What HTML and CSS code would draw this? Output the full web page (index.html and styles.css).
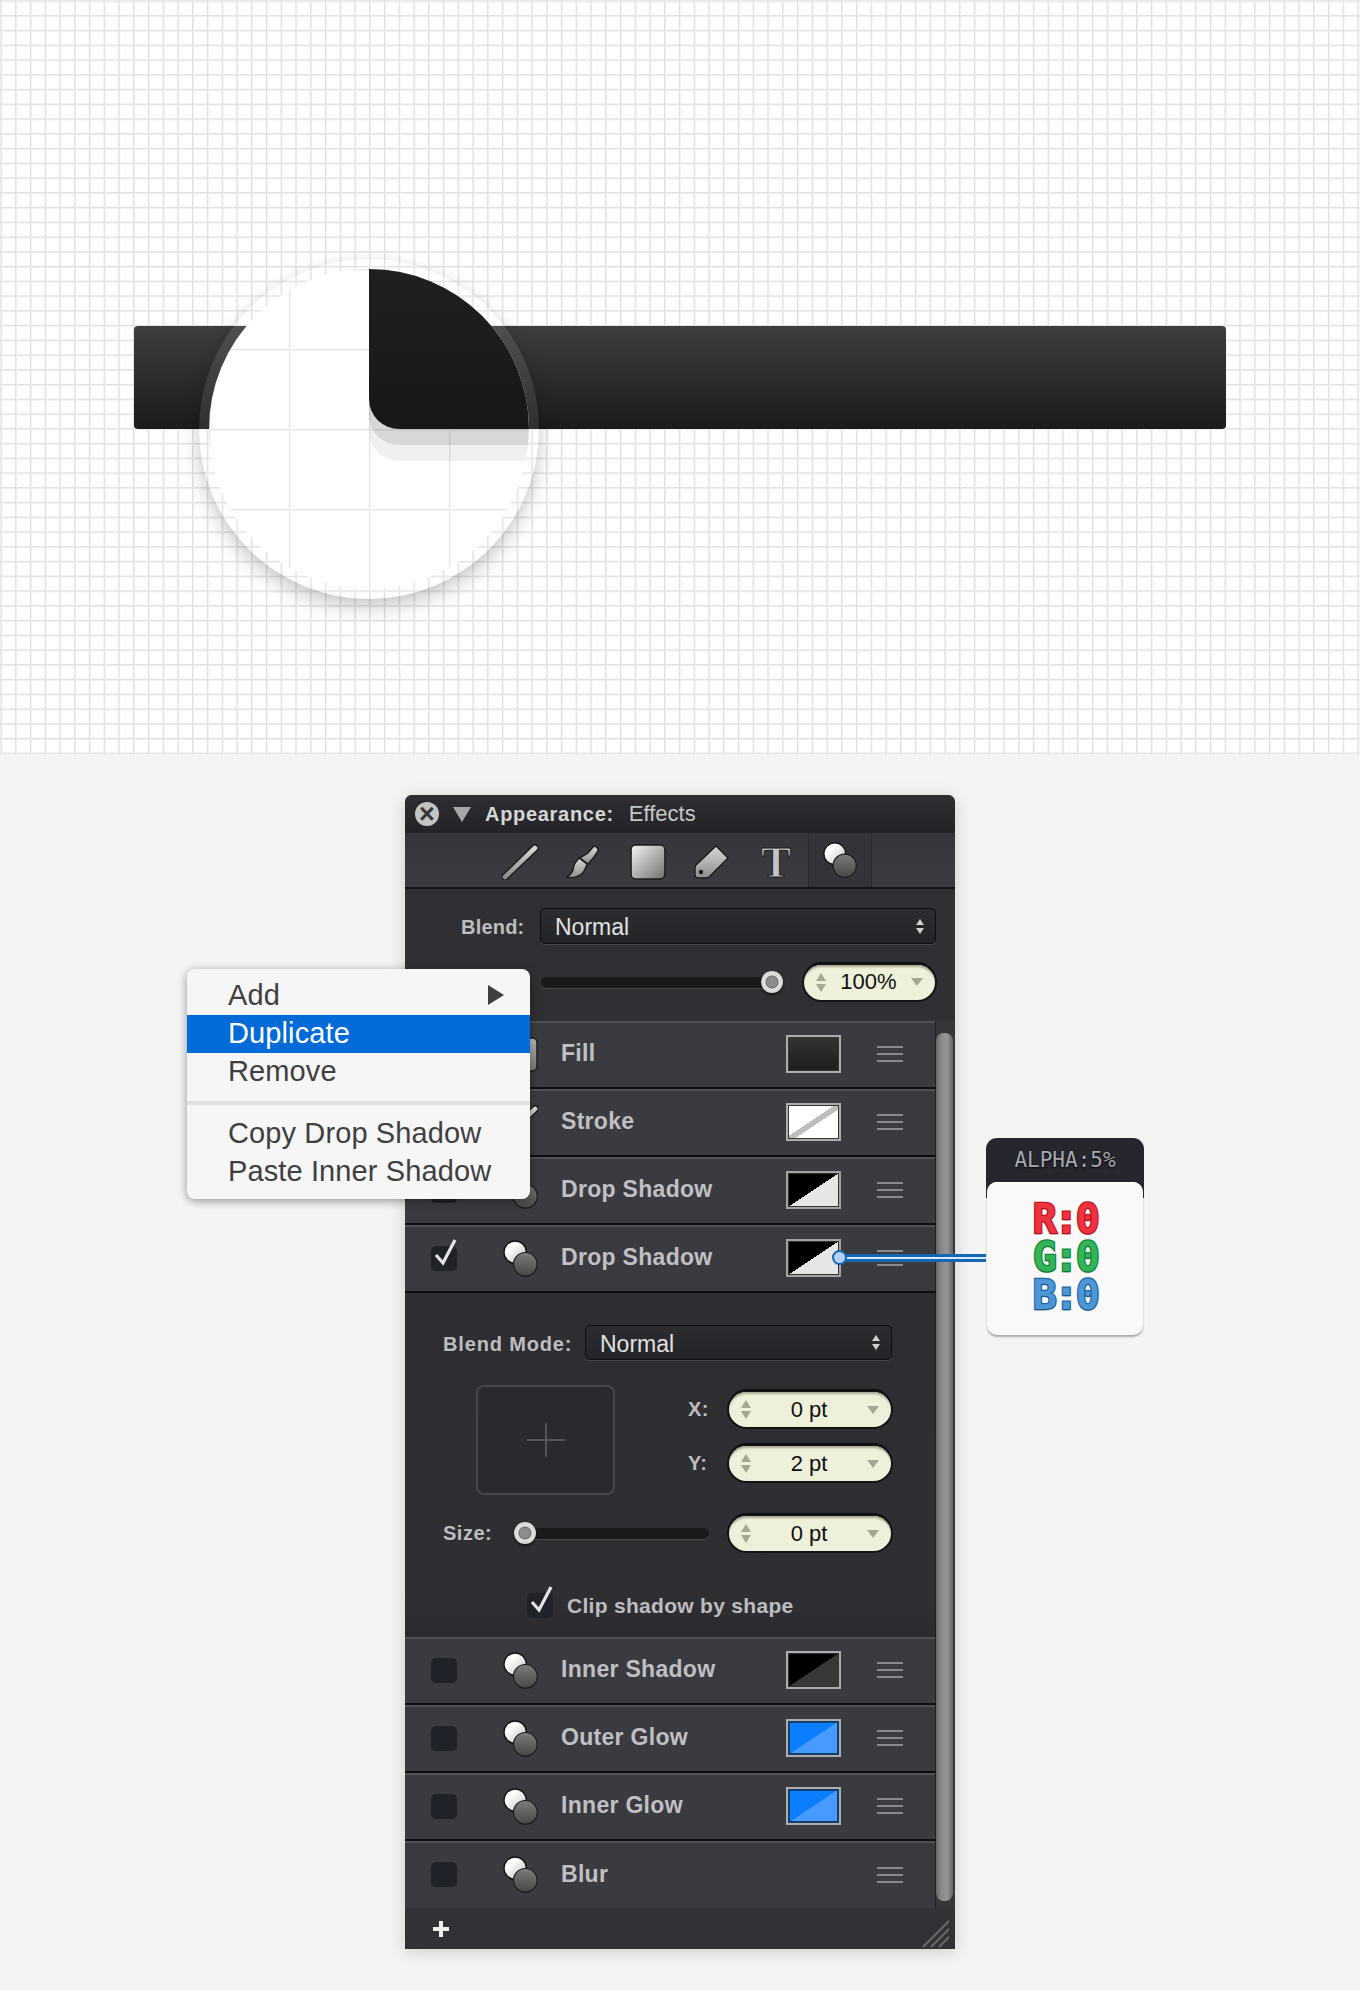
FILE: index.html
```html
<!DOCTYPE html>
<html lang="en">
<head>
    <meta charset="UTF-8" />
    <title>Appearance panel: Effects</title>
    <link rel="stylesheet" href="styles.css">
</head>
<body>
    <svg class="defs" aria-hidden="true">
        <defs>
            <linearGradient id="g-white" x1="0" y1="0" x2="1" y2="1">
                <stop offset="0" stop-color="#f4f4f4"/>
                <stop offset="1" stop-color="#707070"/>
            </linearGradient>
            <linearGradient id="g-tool" x1="0" y1="0" x2="0" y2="1">
                <stop offset="0" stop-color="#d8d8d8"/>
                <stop offset="1" stop-color="#8c8c8c"/>
            </linearGradient>
            <linearGradient id="g-ball" x1="0" y1="0" x2="1" y2="1">
                <stop offset="0.3" stop-color="#ffffff"/>
                <stop offset="1" stop-color="#bdbdbd"/>
            </linearGradient>
            <linearGradient id="g-dark" x1="0" y1="0" x2="0" y2="1">
                <stop offset="0" stop-color="#7c7c7c"/>
                <stop offset="1" stop-color="#464646"/>
            </linearGradient>
            <symbol id="ico-line" viewBox="0 0 36 36">
                <path d="M3 33 33 4" stroke="#1c1c1f" stroke-width="7.5" stroke-linecap="round"/>
                <path d="M3 33 33 4" stroke="url(#g-tool)" stroke-width="4.6" stroke-linecap="round"/>
            </symbol>
            <symbol id="ico-brush" viewBox="0 0 36 36">
                <path d="M1 33c7 2 15-1 18-8l2-5-8-6-4 5c-2 3-1 7-3 9-1 2-3 4-5 5z" fill="url(#g-tool)" stroke="#1c1c1f" stroke-width="1.4"/>
                <path d="M14 14l8-5 5-6c2-2 6 1 5 4l-4 6-6 7z" fill="url(#g-tool)" stroke="#1c1c1f" stroke-width="1.4"/>
            </symbol>
            <symbol id="ico-square" viewBox="0 0 34 34">
                <rect x="1" y="1" width="32" height="32" rx="4.5" fill="url(#g-white)" stroke="#1c1c1f" stroke-width="1.4"/>
            </symbol>
            <symbol id="ico-tag" viewBox="0 0 36 36">
                <path d="M22 2 34 14 15 33c-1 1-2 1-3 1H4c-2 0-3-1-3-3v-7c0-1 0-2 1-3z" fill="url(#g-tool)" stroke="#1c1c1f" stroke-width="1.4"/>
                <circle cx="7" cy="28" r="2.2" fill="#1c1c1f"/>
            </symbol>
            <symbol id="ico-fx" viewBox="0 0 36 38">
                <circle cx="12.5" cy="12.5" r="11.5" fill="url(#g-ball)" stroke="#141416" stroke-width="1.4"/>
                <circle cx="23" cy="25" r="12.2" fill="url(#g-dark)" stroke="#1a1a1c" stroke-width="1.2"/>
            </symbol>
            <symbol id="ico-check" viewBox="0 0 26 30">
                <path d="M4 17 11 25 23 2" fill="none" stroke="#e4e4e6" stroke-width="3.2"/>
            </symbol>
        </defs>
    </svg>

    <section class="canvas">
        <div class="bar"></div>
        <div class="lens">
            <div class="lens-inner">
                <div class="lens-shape"></div>
            </div>
        </div>
    </section>

    <section class="stage">
        <div class="panel">
            <header class="title-bar">
                <span class="close">&times;</span>
                <span class="disclosure"></span>
                <strong class="title">Appearance:</strong>
                <span class="subtitle">Effects</span>
            </header>

            <nav class="toolbar">
                <span class="tool"><svg class="tool-svg"><use href="#ico-line"/></svg></span>
                <span class="tool"><svg class="tool-svg"><use href="#ico-brush"/></svg></span>
                <span class="tool"><svg class="tool-svg"><use href="#ico-square"/></svg></span>
                <span class="tool"><svg class="tool-svg"><use href="#ico-tag"/></svg></span>
                <span class="tool tool-t">T</span>
                <span class="tool tool-active"><svg class="tool-svg"><use href="#ico-fx"/></svg></span>
            </nav>

            <div class="blend-area">
                <div class="blend-row">
                    <label class="field-label blend-label">Blend:</label>
                    <div class="select select-wide">
                        <span class="select-text">Normal</span>
                        <span class="updown"><i class="tri-up"></i><i class="tri-down"></i></span>
                    </div>
                </div>
                <div class="opacity-row">
                    <div class="slider slider-full"><span class="thumb thumb-end"></span></div>
                    <div class="pill pill-short">
                        <span class="steps"><i class="tri-up dim"></i><i class="tri-down dim"></i></span>
                        <span class="pill-value">100%</span>
                        <i class="tri-menu"></i>
                    </div>
                </div>
            </div>

            <div class="panel-body">
                <div class="effects">
                    <div class="row">
                        <span class="check"></span>
                        <svg class="row-icon"><use href="#ico-square"/></svg>
                        <span class="row-name">Fill</span>
                        <span class="swatch swatch-fill"></span>
                        <span class="grip"></span>
                    </div>
                    <div class="row">
                        <span class="check"></span>
                        <svg class="row-icon"><use href="#ico-line"/></svg>
                        <span class="row-name">Stroke</span>
                        <span class="swatch swatch-stroke"></span>
                        <span class="grip"></span>
                    </div>
                    <div class="row">
                        <span class="check"></span>
                        <svg class="row-icon"><use href="#ico-fx"/></svg>
                        <span class="row-name">Drop Shadow</span>
                        <span class="swatch swatch-drop"></span>
                        <span class="grip"></span>
                    </div>
                    <div class="row">
                        <span class="check"><svg class="check-mark"><use href="#ico-check"/></svg></span>
                        <svg class="row-icon"><use href="#ico-fx"/></svg>
                        <span class="row-name">Drop Shadow</span>
                        <span class="swatch swatch-drop"></span>
                        <span class="grip"></span>
                    </div>

                    <div class="details">
                        <div class="mode-row">
                            <label class="field-label mode-label">Blend Mode:</label>
                            <div class="select select-mode">
                                <span class="select-text">Normal</span>
                                <span class="updown"><i class="tri-up"></i><i class="tri-down"></i></span>
                            </div>
                        </div>
                        <div class="offset-row">
                            <div class="offset-box"><span class="cross"></span></div>
                            <div class="offset-fields">
                                <div class="offset-field">
                                    <label class="field-label offset-label">X:</label>
                                    <div class="pill">
                                        <span class="steps"><i class="tri-up dim"></i><i class="tri-down dim"></i></span>
                                        <span class="pill-value">0 pt</span>
                                        <i class="tri-menu"></i>
                                    </div>
                                </div>
                                <div class="offset-field">
                                    <label class="field-label offset-label">Y:</label>
                                    <div class="pill">
                                        <span class="steps"><i class="tri-up dim"></i><i class="tri-down dim"></i></span>
                                        <span class="pill-value">2 pt</span>
                                        <i class="tri-menu"></i>
                                    </div>
                                </div>
                            </div>
                        </div>
                        <div class="size-row">
                            <label class="field-label size-label">Size:</label>
                            <div class="slider slider-size"><span class="thumb thumb-start"></span></div>
                            <div class="pill">
                                <span class="steps"><i class="tri-up dim"></i><i class="tri-down dim"></i></span>
                                <span class="pill-value">0 pt</span>
                                <i class="tri-menu"></i>
                            </div>
                        </div>
                        <div class="clip-row">
                            <span class="check"><svg class="check-mark"><use href="#ico-check"/></svg></span>
                            <span class="clip-label">Clip shadow by shape</span>
                        </div>
                    </div>

                    <div class="row">
                        <span class="check"></span>
                        <svg class="row-icon"><use href="#ico-fx"/></svg>
                        <span class="row-name">Inner Shadow</span>
                        <span class="swatch swatch-inner"></span>
                        <span class="grip"></span>
                    </div>
                    <div class="row">
                        <span class="check"></span>
                        <svg class="row-icon"><use href="#ico-fx"/></svg>
                        <span class="row-name">Outer Glow</span>
                        <span class="swatch swatch-blue"></span>
                        <span class="grip"></span>
                    </div>
                    <div class="row">
                        <span class="check"></span>
                        <svg class="row-icon"><use href="#ico-fx"/></svg>
                        <span class="row-name">Inner Glow</span>
                        <span class="swatch swatch-blue"></span>
                        <span class="grip"></span>
                    </div>
                    <div class="row row-last">
                        <span class="check"></span>
                        <svg class="row-icon"><use href="#ico-fx"/></svg>
                        <span class="row-name">Blur</span>
                        <span class="swatch swatch-none"></span>
                        <span class="grip"></span>
                    </div>
                </div>
                <div class="scrollbar"><div class="scroll-thumb"></div></div>
            </div>

            <footer class="panel-foot">
                <svg class="plus" viewBox="0 0 16 16"><path d="M6 0h4v6h6v4h-6v6H6v-6H0V6h6z" fill="#f0f0f0"/></svg>
                <svg class="resize" viewBox="0 0 28 28">
                    <path d="M1 27 27 1M9 27 27 9M17 27 27 17" stroke="#6a6a6e" stroke-width="2"/>
                </svg>
            </footer>
        </div>

        <ul class="menu">
            <li class="menu-item">Add<i class="menu-arrow"></i></li>
            <li class="menu-item menu-active">Duplicate</li>
            <li class="menu-item">Remove</li>
            <li class="menu-sep"></li>
            <li class="menu-item">Copy Drop Shadow</li>
            <li class="menu-item">Paste Inner Shadow</li>
        </ul>

        <div class="connector"><span class="connector-dot"></span></div>

        <div class="tip">
            <div class="tip-head">ALPHA:5%</div>
            <div class="tip-card">
                <div class="tip-red">R:0</div>
                <div class="tip-green">G:0</div>
                <div class="tip-blue">B:0</div>
            </div>
        </div>
    </section>
</body>
</html>
```

FILE: styles.css
```css
* { box-sizing: border-box; }
html, body { margin: 0; padding: 0; }
body { width: 1360px; height: 1990px; overflow: hidden; background: #f4f4f4; font-family: "Liberation Sans", Arial, sans-serif; }
.defs { display: block; width: 0; height: 0; }
i { display: block; }

/* top canvas */
.canvas {
    position: relative;
    height: 755px;
    padding: 326px 0 0 134px;
    background-color: #fff;
    background-image:
        linear-gradient(to right, #dfdfdf 1px, #f0f0f0 1px, #f0f0f0 1.5px, transparent 1.5px),
        linear-gradient(to bottom, #dfdfdf 1px, #f0f0f0 1px, #f0f0f0 1.5px, transparent 1.5px);
    background-size: 14.76px 14.76px;
    background-position: 0.4px 0.4px;
}
.bar {
    width: 1092px;
    height: 103px;
    border-radius: 4px;
    background: linear-gradient(#3d3e3d, #1a1b1a);
}
.lens {
    position: absolute;
    left: 199px;
    top: 259px;
    width: 340px;
    height: 340px;
    padding: 10px;
    border-radius: 50%;
    background: rgba(255, 255, 255, 0.09);
    box-shadow: 0 9px 20px rgba(0, 0, 0, 0.2), 0 0 10px rgba(0, 0, 0, 0.04);
}
.lens-inner {
    position: relative;
    width: 320px;
    height: 320px;
    border-radius: 50%;
    overflow: hidden;
    background-color: #fff;
    background-image:
        linear-gradient(to right, #e6e6e6 1px, #f4f4f4 1px, #f4f4f4 2px, transparent 2px),
        linear-gradient(to bottom, #e6e6e6 1px, #f4f4f4 1px, #f4f4f4 2px, transparent 2px);
    background-size: 80px 80px;
    background-position: 0 0;
}
.lens-shape {
    position: absolute;
    left: 160px;
    top: 0;
    width: 170px;
    height: 160px;
    border-bottom-left-radius: 30px;
    background: linear-gradient(#1f201f, #161716);
    box-shadow: 0 16px 0 rgba(0, 0, 0, 0.1), 0 32px 0 rgba(0, 0, 0, 0.06);
}

/* lower part */
.stage { position: relative; height: 1235px; padding: 40px 0 0 405px; }

.panel {
    width: 550px;
    height: 1154px;
    border-radius: 7px 7px 0 0;
    background: #2f2f33;
    box-shadow: 0 3px 18px rgba(0, 0, 0, 0.16);
    overflow: hidden;
}
.title-bar {
    display: flex;
    align-items: center;
    height: 38px;
    padding-left: 10px;
    background: linear-gradient(#2e2e33, #232327);
    color: #d6d6d8;
    font-size: 20px;
}
.close {
    display: flex;
    align-items: center;
    justify-content: center;
    width: 24px;
    height: 24px;
    border-radius: 50%;
    background: #c4c4c4;
    color: #37373b;
    font-size: 27px;
    font-weight: bold;
    line-height: 24px;
}
.disclosure {
    width: 0;
    height: 0;
    margin-left: 14px;
    border-left: 9px solid transparent;
    border-right: 9px solid transparent;
    border-top: 15px solid #a6a6a8;
}
.title { margin-left: 14px; letter-spacing: 0.7px; }
.subtitle { margin-left: 15px; font-size: 22px; color: #c6c6c8; }

.toolbar {
    display: flex;
    height: 56px;
    padding: 3px 0 0 83px;
    background: linear-gradient(#35363b, #3b3c42);
    border-bottom: 2px solid #141416;
}
.tool { display: flex; align-items: center; justify-content: center; width: 64px; }
.tool-svg { width: 36px; height: 36px; }
.tool-t {
    font-family: "Liberation Serif", serif;
    font-size: 45px;
    font-weight: bold;
    color: #c4c4c4;
    -webkit-text-stroke: 1px #1c1c1f;
}
.tool-active { margin-top: -3px; background: #33343a; border-left: 1px solid #2a2a2e; border-right: 1px solid #2a2a2e; }

.blend-area { height: 132px; padding-top: 19px; background: #303034; }
.blend-row { display: flex; align-items: center; height: 36px; }
.field-label { color: #bdbdc0; font-size: 20px; font-weight: bold; letter-spacing: 0.5px; }
.blend-label { width: 135px; padding: 3px 0 0 56px; letter-spacing: 0.2px; }
.select {
    display: flex;
    align-items: center;
    justify-content: space-between;
    height: 36px;
    padding: 0 11px 0 14px;
    border: 1px solid #0e0e10;
    border-radius: 5px;
    background: linear-gradient(#2c2d31, #232428);
    box-shadow: 0 1px 0 #46474b;
    color: #e0e0e0;
    font-size: 23px;
}
.select-text { padding-top: 3px; }
.select-wide { width: 396px; }
.select-mode { width: 307px; height: 35px; }
.updown { display: flex; flex-direction: column; gap: 3px; }
.tri-up, .tri-down {
    width: 0;
    height: 0;
    border-left: 4px solid transparent;
    border-right: 4px solid transparent;
}
.tri-up { border-bottom: 6px solid #d0d0d0; }
.tri-down { border-top: 6px solid #d0d0d0; }
.tri-up.dim { border-left-width: 5px; border-right-width: 5px; border-bottom: 8px solid #a6a696; }
.tri-down.dim { border-left-width: 5px; border-right-width: 5px; border-top: 8px solid #a6a696; }

.opacity-row { display: flex; align-items: center; height: 36px; margin-top: 20px; padding-left: 136px; }
.slider { position: relative; height: 11px; border-radius: 6px; background: #1a1a1d; box-shadow: 0 1px 0 #47484c; }
.slider-full { width: 231px; }
.slider-size { width: 195px; }
.thumb {
    position: absolute;
    top: -6px;
    width: 22px;
    height: 22px;
    border-radius: 50%;
    background: radial-gradient(circle, #8c8c8c 0 5px, #6e6e6e 6px, #e2e2e2 7px, #c4c4c4);
    box-shadow: 0 2px 3px rgba(0, 0, 0, 0.6);
}
.thumb-end { right: -11px; }
.thumb-start { left: 0; }

.pill {
    display: flex;
    align-items: center;
    width: 162px;
    height: 35px;
    padding: 0 12px;
    border-radius: 18px;
    background: #eef0da;
    box-shadow: 0 0 0 2px #141416, 0 -2px 0 1px #0c0c0e, inset 0 3px 2px -1px #a8a896;
    color: #111;
    font-size: 22px;
}
.pill-short { width: 131px; margin-left: 32px; }
.steps { display: flex; flex-direction: column; gap: 3px; }
.pill-value { flex: 1; text-align: center; }
.tri-menu {
    width: 0;
    height: 0;
    border-left: 6px solid transparent;
    border-right: 6px solid transparent;
    border-top: 8px solid #a6a696;
}

.panel-body { display: flex; height: 887px; }
.effects { width: 530px; }
.row {
    display: flex;
    align-items: center;
    height: 68px;
    padding: 0 0 2px 26px;
    background: #3a3b40;
    border-top: 2px solid #505156;
    border-bottom: 2px solid #0e0e10;
}
.row-last { height: 67px; border-bottom: 0; }
.check {
    display: block;
    position: relative;
    flex: none;
    width: 26px;
    height: 25px;
    border-radius: 5px;
    background: #20222a;
}
.check-mark { position: absolute; left: 1px; bottom: 3px; width: 26px; height: 30px; overflow: visible; }
.row-icon { flex: none; width: 35px; height: 37px; margin-left: 46px; }
.row-name {
    width: 225px;
    margin-left: 23px;
    padding-bottom: 1px;
    color: #c0c0c4;
    font-size: 23px;
    font-weight: bold;
    letter-spacing: 0.3px;
}
.swatch { flex: none; width: 55px; height: 38px; border: 2px solid #adadad; box-shadow: inset 0 0 0 1px #333; }
.swatch-fill { background: linear-gradient(#323332, #1c1d1c); }
.swatch-stroke { background: linear-gradient(to bottom right, #fff 46%, #bdbdbd 46% 56%, #fff 56%); }
.swatch-drop { border-color: #a2a2a2; background: linear-gradient(to bottom right, #000 50%, #e6e6e6 50%); }
.swatch-inner { background: linear-gradient(to bottom right, #000 50%, #38383a 50%); }
.swatch-blue { background: linear-gradient(to bottom right, #0b7dff 50%, #479bff 50%); box-shadow: inset 0 0 0 2px #163e6c; }
.swatch-none { visibility: hidden; }
.grip {
    flex: none;
    width: 26px;
    height: 16px;
    margin-left: 36px;
    background: repeating-linear-gradient(#8a8a8e 0 2px, transparent 2px 7px);
}

.details { height: 344px; padding: 32px 0 0 38px; background: linear-gradient(#2e2e32, #2f2f33 90%, #2b2b2f); }
.mode-row { display: flex; align-items: center; }
.mode-label { width: 142px; padding-top: 3px; letter-spacing: 0.85px; }
.offset-row { display: flex; margin-top: 25px; padding-left: 33px; }
.offset-box {
    display: flex;
    align-items: center;
    justify-content: center;
    width: 139px;
    height: 110px;
    border: 2px solid #47474b;
    border-radius: 8px;
    background: #2a2a2e;
}
.cross {
    width: 38px;
    height: 34px;
    background:
        linear-gradient(#54545a, #54545a) center / 38px 2px no-repeat,
        linear-gradient(#54545a, #54545a) center / 2px 34px no-repeat;
}
.offset-fields { display: flex; flex-direction: column; gap: 19px; margin: 7px 0 0 73px; }
.offset-field { display: flex; align-items: center; }
.offset-label { width: 41px; }
.size-row { display: flex; align-items: center; margin-top: 21px; }
.size-label { width: 71px; }
.size-row .pill { margin-left: 20px; }
.clip-row { display: flex; align-items: center; margin: 42px 0 0 84px; }
.clip-label { margin-left: 14px; color: #bdbdc0; font-size: 21px; font-weight: bold; letter-spacing: 0.3px; }

.scrollbar { width: 20px; background: #36373b; border-left: 1px solid #1f1f22; }
.scroll-thumb {
    width: 17px;
    height: 868px;
    margin-top: 12px;
    border-radius: 8px;
    background: linear-gradient(to right, #666, #8a8a8a 30%, #969696 65%, #666);
}
.panel-foot { display: flex; align-items: center; justify-content: space-between; height: 42px; padding: 0 5px 0 28px; background: #323236; }
.plus { width: 16px; height: 16px; }
.resize { width: 28px; height: 28px; margin-top: 10px; }

/* context menu */
.menu {
    position: absolute;
    left: 187px;
    top: 214px;
    width: 343px;
    height: 230px;
    margin: 0;
    padding: 8px 0 0;
    list-style: none;
    border-radius: 8px;
    background: #f6f6f6;
    box-shadow: 0 2px 10px rgba(0, 0, 0, 0.4);
    font-size: 29px;
    letter-spacing: 0.12px;
    color: #3f3f42;
}
.menu-item { position: relative; height: 38px; padding-left: 41px; line-height: 36px; }
.menu-active { background: #026bd8; color: #fff; }
.menu-sep { height: 4px; margin: 10px 0 10px; background: #e0e0e0; }
.menu-arrow {
    position: absolute;
    right: 26px;
    top: 8px;
    width: 0;
    height: 0;
    border-top: 10px solid transparent;
    border-bottom: 10px solid transparent;
    border-left: 16px solid #3f3f42;
}

/* colour note */
.connector {
    position: absolute;
    left: 839px;
    top: 499px;
    width: 147px;
    height: 8px;
    background: linear-gradient(#1367b4 0 3px, #d9e9f7 3px 5px, #1367b4 5px);
}
.connector-dot {
    position: absolute;
    left: -7px;
    top: -4px;
    width: 15px;
    height: 15px;
    border: 2px solid #1367b4;
    border-radius: 50%;
    background: #b7d1f7;
}
.tip { position: absolute; left: 986px; top: 383px; width: 158px; }
.tip-head {
    height: 60px;
    padding-top: 8px;
    border-radius: 11px 11px 0 0;
    background: #26272e;
    color: #a6a8ae;
    font-family: "DejaVu Sans Mono", monospace;
    font-size: 21px;
    line-height: 28px;
    text-align: center;
    text-shadow: 0 1px 2px #000;
}
.tip-card {
    position: relative;
    width: 156px;
    height: 153px;
    margin: -16px 0 0 1px;
    padding-top: 18px;
    border-radius: 10px;
    background: #f9f9f9;
    box-shadow: inset 0 2px 0 #fff, 0 2px 2px rgba(0, 0, 0, 0.3);
    font-family: "DejaVu Sans Mono", monospace;
    font-size: 40px;
    font-weight: bold;
    letter-spacing: -2.5px;
    line-height: 38px;
    text-align: center;
    paint-order: stroke fill;
    text-shadow: 0 2px 0 rgba(0, 0, 0, 0.12);
}
.tip-red { color: #ee3340; -webkit-text-stroke: 2.5px #c4141f; }
.tip-green { color: #35b357; -webkit-text-stroke: 2.5px #0f8a3c; }
.tip-blue { color: #4d97d4; -webkit-text-stroke: 2.5px #1a68a8; }
```
